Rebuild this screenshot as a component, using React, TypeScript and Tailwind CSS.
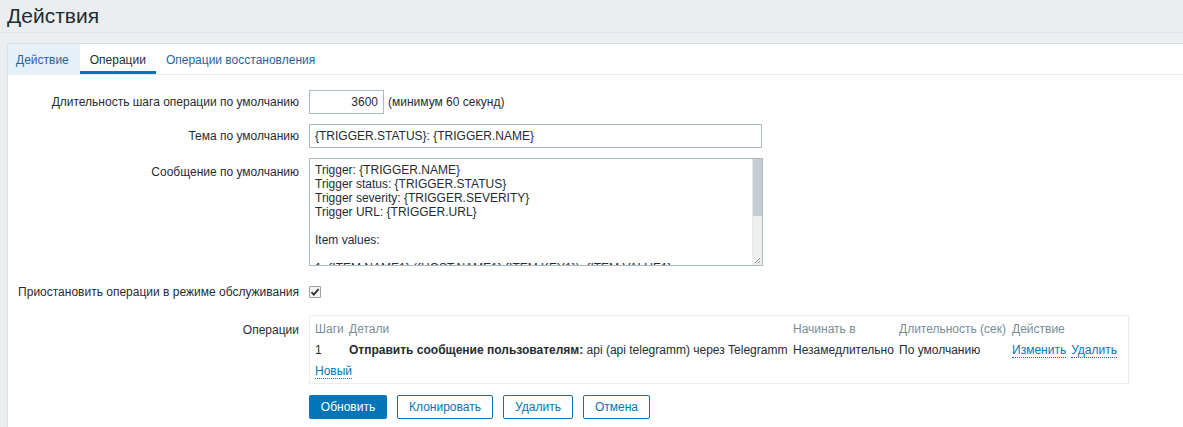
import React from "react";

const font = { fontFamily: '"Liberation Sans", Arial, sans-serif' };

function Label({ children, top = false }: { children: React.ReactNode; top?: boolean }) {
  return (
    <div className={`w-[291px] shrink-0 text-right whitespace-nowrap ${top ? "pt-[5px]" : ""}`}>
      {children}
    </div>
  );
}

function Link({ children }: { children: React.ReactNode }) {
  return (
    <span className="text-[#0275b8] border-b border-dotted border-[#0275b8] leading-[14px]">{children}</span>
  );
}

export default function App() {
  const lines = [
    "Trigger: {TRIGGER.NAME}",
    "Trigger status: {TRIGGER.STATUS}",
    "Trigger severity: {TRIGGER.SEVERITY}",
    "Trigger URL: {TRIGGER.URL}",
    "",
    "Item values:",
    "",
    "1. {ITEM.NAME1} ({HOST.NAME1}:{ITEM.KEY1}): {ITEM.VALUE1}",
  ];
  return (
    <div style={font} className="w-[1183px] h-[427px] overflow-hidden bg-[#ebeef0] text-[12px] text-[#1f2c33]">
      <div className="h-[33px] border-b border-[#dfe3e6] pl-[7px] pt-[3px]">
        <h1 className="text-[21px] leading-[25px] text-[#1f2c33]">Действия</h1>
      </div>
      <div className="h-[10px]" />
      <div className="ml-[7px] bg-white border-t border-l border-[#dce0e3] h-[400px]">
        {/* tabs */}
        <div className="flex h-[31px] border-b border-[#ebeef0] items-stretch">
          <div className="px-[8px] pr-[11px] pt-[1px] flex items-center bg-[#e5f0f8] text-[#1f65a0]">Действие</div>
          <div className="px-[10px] flex items-center border-b-[3px] border-[#0275b8] pt-[4px] text-[#1f2c33]">Операции</div>
          <div className="px-[10px] pt-[1px] flex items-center text-[#1f65a0]">Операции восстановления</div>
        </div>
        {/* form */}
        <div className="pt-[15px] flex flex-col">
          <div className="flex items-center gap-[10px] h-[24px]">
            <Label>Длительность шага операции по умолчанию</Label>
            <div className="flex items-center gap-[4px]">
              <div className="w-[75px] h-[24px] border border-[#acbbc2] text-right pr-[5px] leading-[22px]">3600</div>
              <span>(минимум 60 секунд)</span>
            </div>
          </div>
          <div className="flex items-center gap-[10px] h-[24px] mt-[10px]">
            <Label>Тема по умолчанию</Label>
            <div className="w-[453px] h-[24px] border border-[#acbbc2] pl-[5px] leading-[22px]">{"{TRIGGER.STATUS}: {TRIGGER.NAME}"}</div>
          </div>
          <div className="flex items-start gap-[10px] mt-[10px]">
            <Label top>Сообщение по умолчанию</Label>
            <div className="relative w-[454px] h-[108px] border border-[#acbbc2] overflow-hidden">
              <div className="pl-[5px] pt-[4px] leading-[14px] whitespace-pre">
                {lines.map((l, i) => (
                  <div key={i} className="h-[14px]">{l}</div>
                ))}
              </div>
              <div className="absolute right-0 top-0 bottom-0 w-[10px] bg-[#f0f0f0] border-l border-[#e6e6e6]">
                <div className="h-[57px] bg-[#c5ced4]" />
              </div>
              <div className="absolute right-0 bottom-0 w-[10px] h-[10px] bg-[#f0f0f0]">
                <svg width="10" height="10" viewBox="0 0 10 10">
                  <line x1="8" y1="3" x2="3" y2="8" stroke="#888" strokeWidth="1" />
                  <line x1="8" y1="6" x2="6" y2="8" stroke="#888" strokeWidth="1" />
                </svg>
              </div>
            </div>
          </div>
          <div className="flex items-center gap-[10px] h-[24px] mt-[14px]">
            <Label>Приостановить операции в режиме обслуживания</Label>
            <div className="w-[12px] h-[12px] border border-[#a0a0a0] bg-[#f2f2f2] rounded-[1px] flex items-center justify-center">
              <svg width="10" height="10" viewBox="0 0 10 10">
                <path d="M1.5 5.2 L3.8 7.6 L8.6 2.2" fill="none" stroke="#333" strokeWidth="1.8" />
              </svg>
            </div>
          </div>
          <div className="flex items-start gap-[10px] mt-[11px]">
            <Label top>
              <span className="relative top-[1px]">Операции</span>
            </Label>
            <div className="w-[820px] h-[69px] border border-[#ebeef0] px-[5px] pt-[2px]">
              <div className="grid grid-cols-[34px_444px_106px_113px_1fr] h-[22px] items-center text-[#768d99] whitespace-nowrap">
                <div>Шаги</div>
                <div>Детали</div>
                <div>Начинать в</div>
                <div>Длительность (сек)</div>
                <div>Действие</div>
              </div>
              <div className="grid grid-cols-[34px_444px_106px_113px_1fr] h-[20px] items-center whitespace-nowrap">
                <div>1</div>
                <div>
                  <b>Отправить сообщение пользователям:</b> api (api telegramm) через Telegramm
                </div>
                <div>Незамедлительно</div>
                <div>По умолчанию</div>
                <div className="flex gap-[5px]">
                  <Link>Изменить</Link>
                  <Link>Удалить</Link>
                </div>
              </div>
              <div className="h-[22px] flex items-center">
                <Link>Новый</Link>
              </div>
            </div>
          </div>
          <div className="flex gap-[10px] mt-[11px] ml-[301px]">
            <button className="w-[78px] h-[24px] bg-[#0275b8] text-white rounded-[2px]">Обновить</button>
            <button className="w-[96px] h-[24px] border border-[#0275b8] text-[#0275b8] bg-white rounded-[2px]">Клонировать</button>
            <button className="w-[70px] h-[24px] border border-[#0275b8] text-[#0275b8] bg-white rounded-[2px]">Удалить</button>
            <button className="w-[67px] h-[24px] border border-[#0275b8] text-[#0275b8] bg-white rounded-[2px]">Отмена</button>
          </div>
        </div>
      </div>
    </div>
  );
}
